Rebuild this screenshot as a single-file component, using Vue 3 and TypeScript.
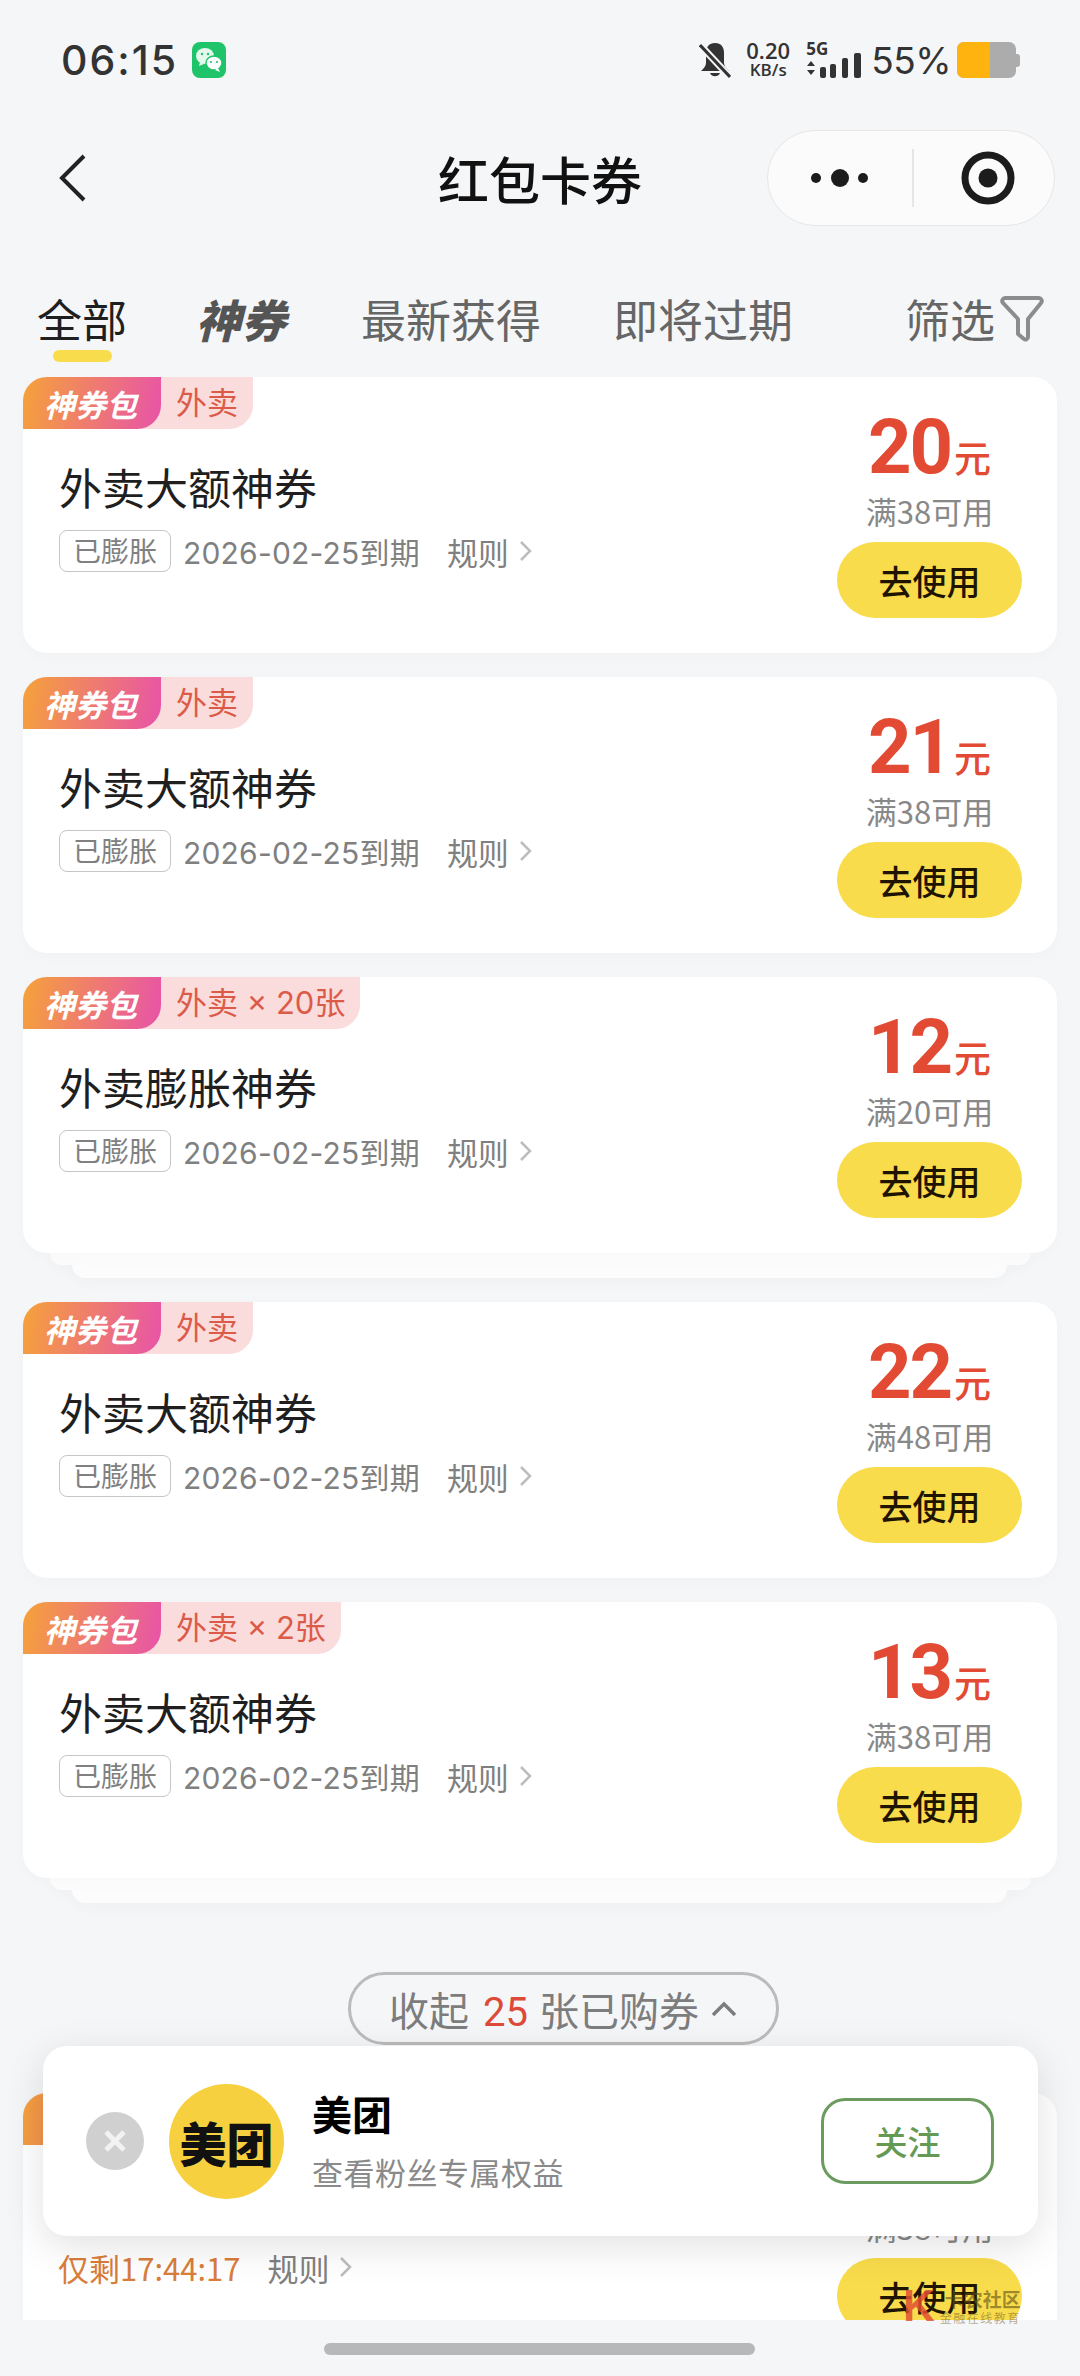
<template>
  <div class="page">
    <div class="status">
      <span class="clock">06:15</span>
      <svg class="wechat" width="34" height="36" viewBox="0 0 34 36">
        <rect width="34" height="36" rx="8" fill="#1fc46a" />
        <ellipse cx="13" cy="14" rx="9" ry="8" fill="#e4f8ec" />
        <path d="M8 20l-1 4 5-2z" fill="#e4f8ec" />
        <ellipse cx="22" cy="21" rx="8" ry="7" fill="#fff" stroke="#1fc46a" stroke-width="1.5" />
        <path d="M26 26l2 4-5-2z" fill="#fff" />
        <circle cx="10" cy="12" r="1.2" fill="#1fc46a" />
        <circle cx="16" cy="12" r="1.2" fill="#1fc46a" />
        <circle cx="19" cy="20" r="1.1" fill="#1fc46a" />
        <circle cx="25" cy="20" r="1.1" fill="#1fc46a" />
      </svg>
      <div class="status-right">
        <svg width="32" height="36" viewBox="0 0 32 36">
          <path d="M16 1c-6 0-9 4-9 10v10c0 3-2 5-5 8h28c-3-3-5-5-5-8V11c0-6-3-10-9-10z" fill="#333" />
          <path d="M11 31a5.500 5.500 0 0 0 10 0z" fill="#333" />
          <path d="M1 3l30 32" stroke="#f5f6f8" stroke-width="7" />
          <path d="M1 3l30 32" stroke="#333" stroke-width="3" />
        </svg>
        <div class="speed"><b>0.20</b><span>KB/s</span></div>
        <div class="signal">
          <span class="five-g">5G</span>
          <svg width="56" height="26" viewBox="0 10 56 26">
            <path d="M1 24l4-5 4 5zM1 28l4 5 4-5z" fill="#333" />
            <rect x="14" y="25" width="6" height="11" rx="2" fill="#333" />
            <rect x="24" y="22" width="6" height="14" rx="2" fill="#333" />
            <rect x="36" y="16" width="6" height="20" rx="2" fill="#333" />
            <rect x="48" y="11" width="7" height="25" rx="2" fill="#333" />
          </svg>
        </div>
        <span class="percent">55%</span>
        <div class="battery"><i class="battery__fill" /><i class="battery__nub" /></div>
      </div>
    </div>

    <div class="nav">
      <svg class="back" width="28" height="50" viewBox="0 0 28 50">
        <path d="M25 3L3 25l22 22" fill="none" stroke="#222" stroke-width="4" />
      </svg>
      <h1 class="title">红包卡券</h1>
      <div class="capsule">
        <svg width="60" height="20" viewBox="0 0 60 20">
          <circle cx="6" cy="10" r="5" fill="#1c1c1c" />
          <circle cx="30" cy="10" r="9" fill="#1c1c1c" />
          <circle cx="53" cy="10" r="5" fill="#1c1c1c" />
        </svg>
        <i class="capsule__line" />
        <svg width="54" height="54" viewBox="0 0 54 54">
          <circle cx="27" cy="27" r="23" fill="none" stroke="#1c1c1c" stroke-width="7" />
          <circle cx="27" cy="27" r="9.500" fill="#1c1c1c" />
        </svg>
      </div>
    </div>

    <div class="tabs">
      <span class="tab tab--active">全部</span>
      <span class="tab tab--brand">神券</span>
      <span class="tab">最新获得</span>
      <span class="tab">即将过期</span>
      <span class="filter">
        筛选
        <svg width="46" height="48" viewBox="0 0 46 48">
          <path d="M6 3h34a3 3 0 0 1 2 5L29 24v18a2.500 2.500 0 0 1-4 2l-6-5V24L4 8a3 3 0 0 1 2-5z" fill="none" stroke="#8c8c8c" stroke-width="4" stroke-linejoin="round" />
        </svg>
      </span>
    </div>

    <div class="list">
      <template v-for="(c, i) in coupons" :key="i">
        <section class="card">
          <div class="tag">
            <span class="tag__brand">神券包</span>
            <span class="tag__type">{{ c.tag }}</span>
          </div>
          <div class="info">
            <div class="name">{{ c.name }}</div>
            <div class="meta">
              <span v-if="c.countdown" class="countdown">{{ c.countdown }}</span>
              <template v-else>
                <span class="swelled">已膨胀</span>
                <span class="date">2026-02-25到期</span>
              </template>
              <span class="rule">规则</span>
              <svg width="13" height="24" viewBox="0 0 13 24">
                <path d="M2 3l9 9-9 9" fill="none" stroke="#bdbdbd" stroke-width="2.500" />
              </svg>
            </div>
          </div>
          <div class="side">
            <div class="price">{{ c.price }}<small>元</small></div>
            <div class="limit">{{ c.limit }}</div>
            <button type="button" class="use">去使用</button>
          </div>
        </section>
        <template v-if="c.stacked">
          <div class="layer layer--one" />
          <div class="layer layer--two" />
        </template>
        <div class="gap" />
        <button v-if="c.collapseAfter" type="button" class="collapse">
          <span class="collapse__text">收起<em>25</em>张已购券</span>
          <svg width="26" height="16" viewBox="0 0 26 16">
            <path d="M2 14L13 3l11 11" fill="none" stroke="#7d7d7d" stroke-width="3.500" />
          </svg>
        </button>
      </template>
    </div>

    <div class="follow-bar">
      <span class="close">
        <svg width="26" height="26" viewBox="0 0 26 26">
          <path d="M4 4l18 18M22 4L4 22" stroke="#f2f2f2" stroke-width="5" />
        </svg>
      </span>
      <span class="avatar">美团</span>
      <div class="follow-text">
        <div class="follow-name">美团</div>
        <div class="follow-sub">查看粉丝专属权益</div>
      </div>
      <button type="button" class="follow-btn">关注</button>
    </div>

    <div class="mark">
      <span class="mark__k">K</span>
      <div class="mark__text"><b>卡农社区</b><span>金融在线教育</span></div>
    </div>

    <div class="home-bar" />
  </div>
</template>

<script setup lang="ts">
interface Coupon {
  tag: string
  name: string
  price: number
  limit: string
  stacked?: boolean
  collapseAfter?: boolean
  countdown?: string
}

const coupons: Coupon[] = [
  { tag: '外卖', name: '外卖大额神券', price: 20, limit: '满38可用' },
  { tag: '外卖', name: '外卖大额神券', price: 21, limit: '满38可用' },
  { tag: '外卖 × 20张', name: '外卖膨胀神券', price: 12, limit: '满20可用', stacked: true },
  { tag: '外卖', name: '外卖大额神券', price: 22, limit: '满48可用' },
  { tag: '外卖 × 2张', name: '外卖大额神券', price: 13, limit: '满38可用', stacked: true, collapseAfter: true },
  { tag: '外卖', name: '外卖大额神券', price: 15, limit: '满38可用', countdown: '仅剩17:44:17' },
]
</script>

<style>
body {
  background: #f5f6f8;
}
</style>

<style scoped>
.page {
  position: relative;
  width: 1080px;
  height: 2376px;
  overflow: hidden;
  background: #f5f6f8;
  font-family: "Noto Sans CJK SC", "Noto Sans", sans-serif;
  color: #1f1f1f;
}

.status {
  display: flex;
  align-items: center;
  height: 120px;
  padding: 0 64px 0 61px;
  box-sizing: border-box;
}

.clock {
  font-family: Inter, Roboto, sans-serif;
  font-size: 41px;
  font-weight: 500;
  letter-spacing: 2px;
  color: #333;
}

.wechat {
  margin-left: 14px;
}

.status-right {
  display: flex;
  align-items: center;
  margin-left: auto;
  color: #333;
}

.speed {
  display: flex;
  flex-direction: column;
  align-items: center;
  width: 46px;
  margin-left: 14px;
  font-family: "Open Sans", sans-serif;
  line-height: 19px;
}

.speed b {
  font-size: 22px;
  font-weight: 600;
}

.speed span {
  font-size: 17px;
  font-weight: 600;
}

.signal {
  position: relative;
  width: 56px;
  height: 36px;
  margin-left: 15px;
}

.signal svg {
  position: absolute;
  left: 0;
  bottom: 0;
}

.five-g {
  position: absolute;
  left: 0;
  top: -3px;
  font-family: "Open Sans", sans-serif;
  font-size: 17px;
  font-weight: 700;
  line-height: 20px;
}

.percent {
  margin-left: 9px;
  font-family: Inter, sans-serif;
  font-size: 37px;
  color: #333;
  letter-spacing: -0.5px;
}

.battery {
  position: relative;
  width: 59px;
  height: 36px;
  margin-left: 6px;
  border-radius: 7px;
  background: #acacac;
}

.battery__fill {
  display: block;
  width: 33px;
  height: 36px;
  border-radius: 7px 0 0 7px;
  background: #ffb30f;
}

.battery__nub {
  position: absolute;
  right: -4px;
  top: 12px;
  width: 4px;
  height: 13px;
  border-radius: 0 3px 3px 0;
  background: #acacac;
}

.nav {
  display: grid;
  grid-template-columns: 1fr auto 1fr;
  align-items: center;
  height: 116px;
}

.back {
  margin-left: 59px;
}

.title {
  margin: 0;
  font-size: 51px;
  font-weight: 500;
  color: #111;
}

.capsule {
  justify-self: end;
  display: flex;
  align-items: center;
  box-sizing: border-box;
  width: 288px;
  height: 96px;
  margin-right: 25px;
  padding-left: 42px;
  border: 1.5px solid #e6e6e6;
  border-radius: 48px;
  background: #fbfbfb;
}

.capsule__line {
  width: 1.5px;
  height: 58px;
  margin: 0 47px 0 42px;
  background: #e6e6e6;
}

.tabs {
  display: flex;
  align-items: center;
  gap: 72px;
  height: 141px;
  padding: 24px 35px 0 37px;
  box-sizing: border-box;
  font-size: 45px;
  color: #666;
}

.tab {
  position: relative;
  white-space: nowrap;
}

.tab--active {
  color: #1f1f1f;
}

.tab--active::after {
  content: "";
  position: absolute;
  left: 16px;
  right: 15px;
  bottom: -11px;
  height: 12px;
  border-radius: 6px;
  background: #f9dc4b;
}

.tab--brand {
  margin-left: -3px;
  margin-right: 3px;
  font-weight: 900;
  font-style: italic;
  color: #555;
}

.filter {
  display: flex;
  align-items: center;
  gap: 4px;
  margin-left: auto;
  font-size: 45px;
}

.list {
  height: 1943px;
  overflow: hidden;
}

.card {
  position: relative;
  display: flex;
  justify-content: space-between;
  height: 276px;
  margin: 0 23px;
  border-radius: 24px;
  background: #fff;
  box-shadow: 0 4px 14px rgba(0, 0, 0, 0.02);
}

.tag {
  position: absolute;
  left: 0;
  top: 0;
  display: flex;
  height: 52px;
  border-radius: 24px 0 24px 0;
  background: #fadcdc;
}

.tag__brand {
  display: flex;
  align-items: center;
  width: 138px;
  padding-left: 21px;
  box-sizing: border-box;
  border-radius: 24px 0 24px 0;
  background: linear-gradient(100deg, #f5a23a, #e853a8);
  color: #fff;
  font-size: 31px;
  font-weight: 700;
  font-style: italic;
}

.tag__type {
  padding: 0 15px 0 15px;
  font-family: Inter, "Noto Sans CJK SC", sans-serif;
  font-size: 31px;
  line-height: 52px;
  color: #dc5b48;
  white-space: nowrap;
}

.info {
  padding: 79px 0 0 36px;
}

.name {
  font-size: 43px;
  line-height: 60px;
}

.meta {
  display: flex;
  align-items: center;
  height: 42px;
  margin-top: 14px;
  font-size: 30px;
  color: #808080;
}

.swelled {
  width: 112px;
  height: 42px;
  box-sizing: border-box;
  margin-right: 12px;
  border: 1.5px solid #c6c6c6;
  border-radius: 8px;
  font-size: 28px;
  text-align: center;
  line-height: 38px;
}

.countdown {
  margin-left: -1px;
  font-size: 31px;
  color: #d97d3a;
  white-space: nowrap;
}

.date {
  font-family: Inter, "Noto Sans CJK SC", sans-serif;
  letter-spacing: 0.2px;
  white-space: nowrap;
}

.rule {
  margin: 0 10px 0 27px;
  font-size: 31px;
}

.side {
  display: flex;
  flex-direction: column;
  align-items: center;
  width: 185px;
  margin-right: 35px;
  padding-top: 30px;
}

.price {
  height: 80px;
  font-family: Roboto, sans-serif;
  font-size: 76px;
  font-weight: 700;
  line-height: 80px;
  letter-spacing: -2px;
  color: #e34a33;
  white-space: nowrap;
}

.price small {
  margin-left: 3px;
  font-family: "Noto Sans CJK SC", sans-serif;
  font-size: 37px;
  font-weight: 500;
  letter-spacing: 0;
}

.limit {
  margin-top: 4px;
  font-size: 31px;
  line-height: 40px;
  color: #888;
}

.use {
  width: 185px;
  height: 76px;
  margin-top: 11px;
  padding: 0;
  border: 0;
  border-radius: 38px;
  background: #f9dc4b;
  font-family: inherit;
  font-size: 34px;
  font-weight: 500;
  color: #1f1400;
}

.layer {
  background: #fcfcfd;
  box-shadow: 0 4px 14px rgba(0, 0, 0, 0.03);
}

.layer--one {
  height: 12px;
  margin: 0 49px 0 50px;
  border-radius: 0 0 20px 20px;
}

.layer--two {
  height: 13px;
  margin: 0 73px 0 72px;
  border-radius: 0 0 20px 20px;
}

.gap {
  height: 24px;
}

.collapse {
  display: flex;
  align-items: center;
  box-sizing: border-box;
  width: 431px;
  height: 73px;
  margin: 45px 0 48px 348px;
  padding: 0 0 0 38px;
  border: 3px solid #bbb;
  border-radius: 37px;
  background: transparent;
  font-family: inherit;
  font-size: 40px;
  color: #7d7d7d;
}

.collapse__text {
  white-space: nowrap;
}

.collapse em {
  margin: 0 11px 0 14px;
  font-family: Roboto, sans-serif;
  font-style: normal;
  color: #dd4a3a;
}

.collapse svg {
  margin-left: 12px;
}

.follow-bar {
  position: absolute;
  left: 43px;
  top: 2046px;
  display: flex;
  align-items: center;
  width: 995px;
  height: 190px;
  box-sizing: border-box;
  padding: 0 44px 0 43px;
  border-radius: 24px;
  background: #fff;
  box-shadow: 0 10px 40px rgba(0, 0, 0, 0.12);
}

.close {
  display: flex;
  align-items: center;
  justify-content: center;
  width: 58px;
  height: 58px;
  border-radius: 50%;
  background: #d0d0d0;
}

.avatar {
  display: flex;
  align-items: center;
  justify-content: center;
  width: 115px;
  height: 115px;
  margin-left: 25px;
  border-radius: 50%;
  background: #f7d03f;
  font-size: 47px;
  font-weight: 900;
  color: #111;
}

.follow-text {
  margin-left: 28px;
}

.follow-name {
  margin-top: -4px;
  font-size: 40px;
  font-weight: 700;
  line-height: 56px;
  color: #000;
}

.follow-sub {
  margin-top: 9px;
  font-size: 31px;
  line-height: 44px;
  letter-spacing: 0.5px;
  color: #8a8a8a;
}

.follow-btn {
  width: 173px;
  height: 86px;
  margin-left: auto;
  border: 3px solid #6b9b5e;
  border-radius: 24px;
  background: #fff;
  font-family: inherit;
  font-size: 33px;
  font-weight: 500;
  color: #659a55;
}

.mark {
  position: absolute;
  left: 903px;
  top: 2286px;
  display: flex;
  gap: 4px;
}

.mark__k {
  font-family: "Liberation Sans", sans-serif;
  font-size: 44px;
  font-weight: 700;
  line-height: 40px;
  color: rgba(226, 80, 50, 0.85);
}

.mark__text {
  display: flex;
  flex-direction: column;
  align-items: flex-end;
  width: 82px;
  overflow: hidden;
  white-space: nowrap;
}

.mark__text b {
  font-size: 19px;
  line-height: 26px;
  color: rgba(95, 80, 20, 0.6);
}

.mark__text span {
  font-size: 12px;
  line-height: 12px;
  letter-spacing: 1.500px;
  color: rgba(120, 100, 40, 0.55);
}

.home-bar {
  position: absolute;
  left: 324px;
  top: 2343px;
  width: 431px;
  height: 12px;
  border-radius: 6px;
  background: #b7b8ba;
}
</style>
